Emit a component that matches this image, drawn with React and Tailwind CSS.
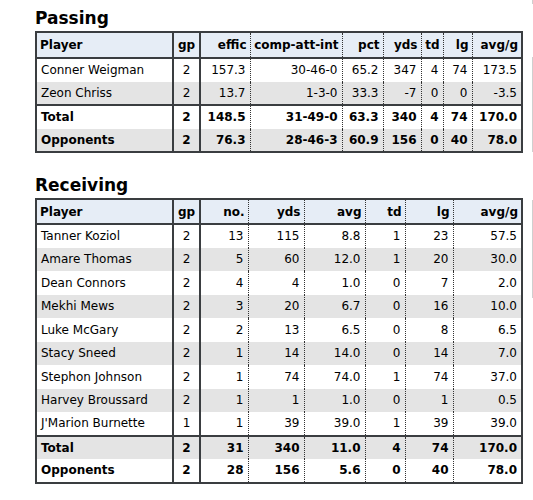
import React from "react";

const passingCols = [
  { w: 137, label: "Player", align: "left" },
  { w: 27, label: "gp", align: "center" },
  { w: 50, label: "effic" },
  { w: 92, label: "comp-att-int" },
  { w: 41, label: "pct" },
  { w: 38, label: "yds" },
  { w: 22, label: "td" },
  { w: 29, label: "lg" },
  { w: 50, label: "avg/g" },
];

const passingRows = [
  ["Conner Weigman", "2", "157.3", "30-46-0", "65.2", "347", "4", "74", "173.5"],
  ["Zeon Chriss", "2", "13.7", "1-3-0", "33.3", "-7", "0", "0", "-3.5"],
];
const passingTotals = [
  ["Total", "2", "148.5", "31-49-0", "63.3", "340", "4", "74", "170.0"],
  ["Opponents", "2", "76.3", "28-46-3", "60.9", "156", "0", "40", "78.0"],
];

const recCols = [
  { w: 137, label: "Player", align: "left" },
  { w: 27, label: "gp", align: "center" },
  { w: 48, label: "no." },
  { w: 56, label: "yds" },
  { w: 61, label: "avg" },
  { w: 40, label: "td" },
  { w: 48, label: "lg" },
  { w: 69, label: "avg/g" },
];

const recRows = [
  ["Tanner Koziol", "2", "13", "115", "8.8", "1", "23", "57.5"],
  ["Amare Thomas", "2", "5", "60", "12.0", "1", "20", "30.0"],
  ["Dean Connors", "2", "4", "4", "1.0", "0", "7", "2.0"],
  ["Mekhi Mews", "2", "3", "20", "6.7", "0", "16", "10.0"],
  ["Luke McGary", "2", "2", "13", "6.5", "0", "8", "6.5"],
  ["Stacy Sneed", "2", "1", "14", "14.0", "0", "14", "7.0"],
  ["Stephon Johnson", "2", "1", "74", "74.0", "1", "74", "37.0"],
  ["Harvey Broussard", "2", "1", "1", "1.0", "0", "1", "0.5"],
  ["J'Marion Burnette", "1", "1", "39", "39.0", "1", "39", "39.0"],
];
const recTotals = [
  ["Total", "2", "31", "340", "11.0", "4", "74", "170.0"],
  ["Opponents", "2", "28", "156", "5.6", "0", "40", "78.0"],
];

function cellBorder(i) {
  if (i === 0 || i === 1) return "border-r-2 border-r-[#3a3d40]";
  return "border-r border-r-[#333] border-dotted";
}

function alignCls(col) {
  if (col.align === "left") return "text-left";
  if (col.align === "center") return "text-center";
  return "text-right";
}

function StatTable({ cols, rows, totals, headH }) {
  return (
    <table className="table-fixed border-collapse border-2 border-[#3a3d40] w-[486px] text-[12px] leading-[14px] text-black">
      <colgroup>
        {cols.map((c, i) => (
          <col key={i} style={{ width: c.w }} />
        ))}
      </colgroup>
      <thead>
        <tr className={`bg-[#e6edf6] ${headH} border-b-2 border-b-[#3a3d40]`}>
          {cols.map((c, i) => (
            <th
              key={i}
              className={`font-bold px-[3px] py-0 whitespace-nowrap ${alignCls(c)} ${i < cols.length - 1 ? cellBorder(i) : ""}`}
            >
              {c.label}
            </th>
          ))}
        </tr>
      </thead>
      <tbody>
        {rows.map((r, ri) => (
          <tr
            key={ri}
            className={`h-[23.5px] ${ri % 2 === 1 ? "bg-[#e4e4e4]" : "bg-white"}`}
          >
            {r.map((v, i) => (
              <td
                key={i}
                className={`${i === 0 ? "pl-[4px]" : "px-[4px]"} py-0 whitespace-nowrap ${alignCls(cols[i])} ${i < cols.length - 1 ? cellBorder(i) : ""}`}
              >
                {v}
              </td>
            ))}
          </tr>
        ))}
      </tbody>
      <tbody className="border-t-2 border-t-[#3a3d40]">
        {totals.map((r, ri) => (
          <tr
            key={ri}
            className={`h-[23.5px] font-bold ${(ri + rows.length) % 2 === 1 ? "bg-[#e4e4e4]" : "bg-white"}`}
          >
            {r.map((v, i) => (
              <td
                key={i}
                className={`${i === 0 ? "pl-[4px]" : "px-[4px]"} py-0 whitespace-nowrap ${alignCls(cols[i])} ${i < cols.length - 1 ? cellBorder(i) : ""}`}
              >
                {v}
              </td>
            ))}
          </tr>
        ))}
      </tbody>
    </table>
  );
}

export default function App() {
  return (
    <div
      className="w-[533px] h-[500px] bg-white flex overflow-hidden"
      style={{ fontFamily: '"DejaVu Sans", Verdana, sans-serif' }}
    >
      <div className="w-[532px] pl-[35px] pt-[8px] flex flex-col">
        <h2 className="text-[17px] font-bold leading-[20px] text-black">Passing</h2>
        <div className="mt-[3px]">
          <StatTable cols={passingCols} rows={passingRows} totals={passingTotals} headH="h-[26px]" />
        </div>
        <h2 className="text-[17px] font-bold leading-[20px] text-black mt-[22px]">Receiving</h2>
        <div className="mt-[3px]">
          <StatTable cols={recCols} rows={recRows} totals={recTotals} headH="h-[25px]" />
        </div>
      </div>
      <div className="w-[1px] flex flex-col">
        <div className="h-[4px] bg-[#cfcfcf]" />
        <div className="h-[53px]" />
        <div className="h-[95px] bg-[#cfcfcf]" />
        <div className="h-[48px]" />
        <div className="h-[98px] bg-[#cfcfcf]" />
      </div>
    </div>
  );
}
